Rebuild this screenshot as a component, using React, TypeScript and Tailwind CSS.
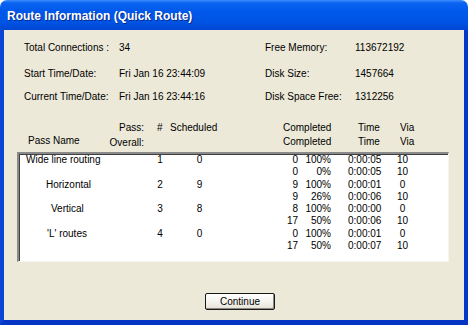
import React from "react";

const font = { fontFamily: '"Liberation Sans", Arial, sans-serif' };

type Pass = {
  name: string;
  indent: string;
  num: string;
  sched: string;
  lines: [string, string, string, string][];
};

const passes: Pass[] = [
  {
    name: "Wide line routing",
    indent: "pl-[7px]",
    num: "1",
    sched: "0",
    lines: [
      ["0", "100%", "0:00:05", "10"],
      ["0", "0%", "0:00:05", "10"],
    ],
  },
  {
    name: "Horizontal",
    indent: "pl-[27px]",
    num: "2",
    sched: "9",
    lines: [
      ["9", "100%", "0:00:01", "0"],
      ["9", "26%", "0:00:06", "10"],
    ],
  },
  {
    name: "Vertical",
    indent: "pl-[32px]",
    num: "3",
    sched: "8",
    lines: [
      ["8", "100%", "0:00:00", "0"],
      ["17", "50%", "0:00:06", "10"],
    ],
  },
  {
    name: "'L' routes",
    indent: "pl-[28px]",
    num: "4",
    sched: "0",
    lines: [
      ["0", "100%", "0:00:01", "0"],
      ["17", "50%", "0:00:07", "10"],
    ],
  },
];

export default function App() {
  return (
    <div
      className="w-[468px] h-[325px] flex flex-col overflow-hidden text-black"
      style={font}
    >
      {/* Title bar */}
      <div className="h-[30px] shrink-0 rounded-t-[7px] bg-[linear-gradient(to_bottom,#3d8dff_0px,#0a63f0_3px,#0058ea_12px,#0054e4_22px,#0046d2_30px)] flex items-center pl-[7px] pt-[1px]">
        <span className="text-white font-bold text-[12px] leading-none [text-shadow:1px_1px_0_#0b2a8a]">
          Route Information (Quick Route)
        </span>
      </div>

      {/* Body */}
      <div className="flex-1 flex flex-col bg-[#ECE9D8] border-l-4 border-r-4 border-b-[5px] border-l-[#0a45d8] border-r-[#0536c8] border-b-[#0535c4] text-[10px]">
        {/* Info grid */}
        <div className="pl-[20px] pt-[12px] grid grid-cols-[95px_146px_90px_1fr] leading-[12px]">
          <div className="h-[26px]">Total Connections :</div>
          <div className="h-[26px]">34</div>
          <div className="h-[26px]">Free Memory:</div>
          <div className="h-[26px]">113672192</div>

          <div className="h-[23px]">Start Time/Date:</div>
          <div className="h-[23px]">Fri Jan 16 23:44:09</div>
          <div className="h-[23px]">Disk Size:</div>
          <div className="h-[23px]">1457664</div>

          <div>Current Time/Date:</div>
          <div>Fri Jan 16 23:44:16</div>
          <div>Disk Space Free:</div>
          <div>1312256</div>
        </div>

        {/* Header */}
        <div className="mt-[18px] leading-[14px]">
          <div className="flex h-[14px]">
            <div className="w-[140px] text-right">Pass:</div>
            <div className="w-[26px] pl-[13px]">#</div>
            <div className="w-[113px]">Scheduled</div>
            <div className="w-[75px]">Completed</div>
            <div className="w-[42px]">Time</div>
            <div>Via</div>
          </div>
          <div className="flex h-[14px]">
            <div className="w-[140px] flex justify-between pl-[24px]">
              <span className="-mt-[1px]">Pass Name</span>
              <span className="mt-[1px]">Overall:</span>
            </div>
            <div className="w-[139px]" />
            <div className="w-[75px]">Completed</div>
            <div className="w-[42px]">Time</div>
            <div>Via</div>
          </div>
        </div>

        {/* List box */}
        <div className="mt-[3px] ml-[13px] w-[432px] h-[110px] bg-white border-t-2 border-l-2 border-b border-r border-t-[#8a8a8a] border-l-[#8a8a8a] border-b-[#f4f4f0] border-r-[#f4f4f0] shadow-[inset_1px_1px_0_#404040]">
          <div className="leading-[12.3px]">
            {passes.map((p) => (
              <div key={p.name} className="flex">
                <div className={`w-[131px] ${p.indent}`}>{p.name}</div>
                <div className="w-[20px] text-center">{p.num}</div>
                <div className="w-[59px] text-center">{p.sched}</div>
                <div className="flex flex-col">
                  {p.lines.map((l, i) => (
                    <div key={i} className="flex h-[12.3px]">
                      <div className="w-[69px] text-right">{l[0]}</div>
                      <div className="w-[33px] text-right">{l[1]}</div>
                      <div className="w-[59px] pl-[17px]">{l[2]}</div>
                      <div className="w-[25px] text-center">{l[3]}</div>
                    </div>
                  ))}
                </div>
              </div>
            ))}
          </div>
        </div>

        {/* Button */}
        <div className="mt-[31px] pl-[201px]">
          <button
            className="w-[70px] h-[17px] rounded-[2px] border border-[#1a1a1a] bg-[linear-gradient(to_bottom,#ffffff,#f2f1ea_60%,#e3e1d6)] shadow-[inset_-1px_-1px_0_#8c8a80] text-[10px] leading-[15px] text-black"
            style={font}
          >
            Continue
          </button>
        </div>
      </div>
    </div>
  );
}
